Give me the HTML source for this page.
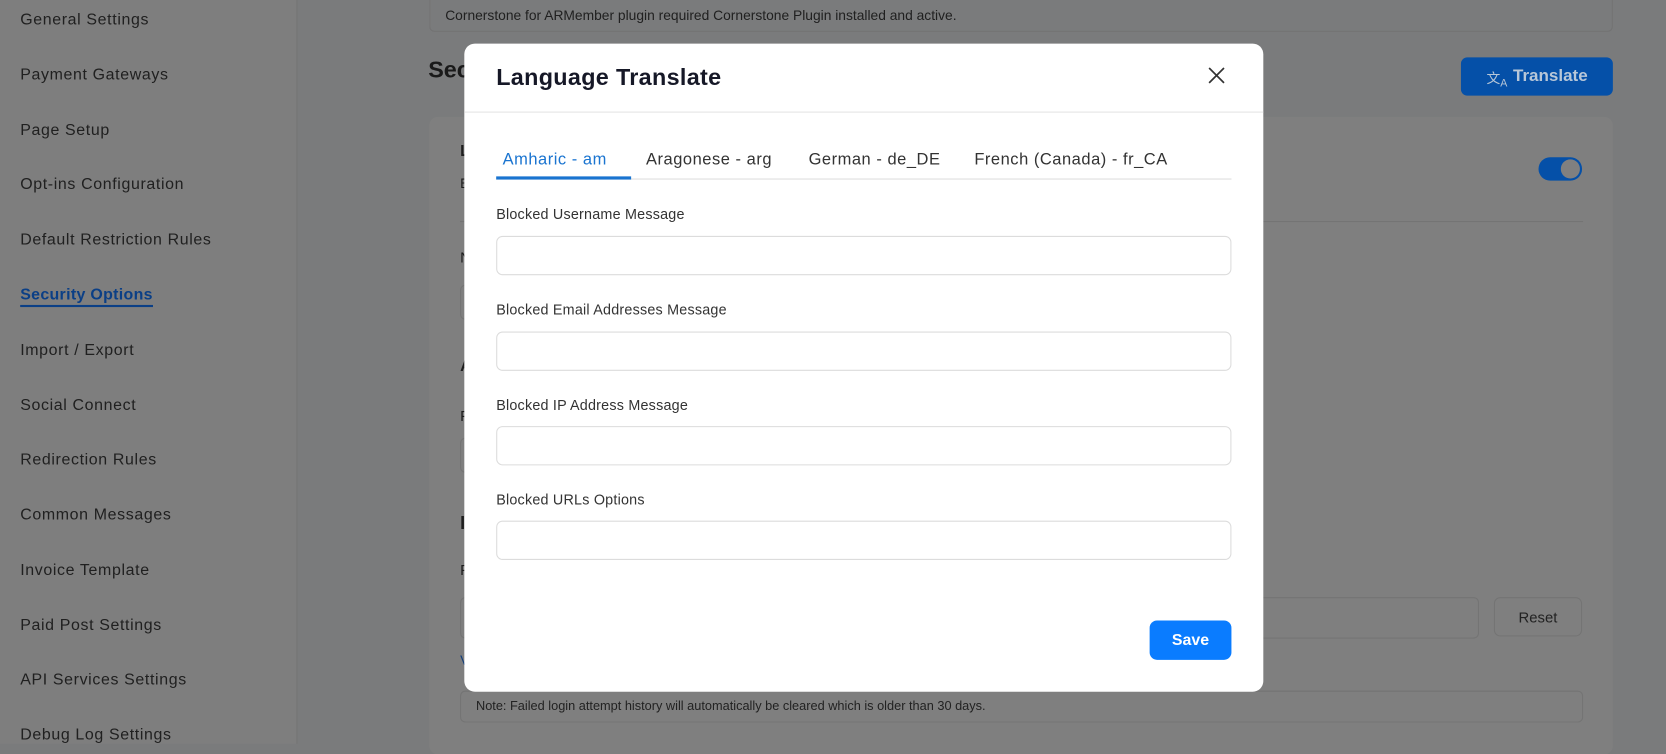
<!DOCTYPE html>
<html><head><meta charset="utf-8"><style>
*{box-sizing:border-box;margin:0;padding:0}
html,body{width:1666px;height:733px;overflow:hidden;background:#7a7b7c;font-family:"Liberation Sans",sans-serif}
#w{position:absolute;left:0;top:0;width:1568px;height:690px;transform:scale(1.0625);transform-origin:0 0}
.a{position:absolute}
.side{left:0;top:0;width:280px;height:700px;background:#7e7e7e;border-right:1px solid #747474}
.si{position:absolute;left:19px;font-size:15px;color:#202020;letter-spacing:.6px}
.modal{left:437px;top:41px;width:752px;height:610px;background:#fff;border-radius:10px}
.lab{position:absolute;left:30px;font-size:13.5px;color:#333;letter-spacing:.2px}
.inp{position:absolute;left:30px;width:692px;height:37px;border:1px solid #dcdcdc;border-radius:6px}
.tab{position:absolute;top:101px;font-size:15.5px;color:#333;letter-spacing:.5px}
.pk{position:absolute;left:433px;font-size:15px;color:#1e1e1e}
</style></head><body><div id="w">
<div class="a side">
<div class="si" style="top:10px">General Settings</div>
<div class="si" style="top:62px">Payment Gateways</div>
<div class="si" style="top:114px">Page Setup</div>
<div class="si" style="top:165px">Opt-ins Configuration</div>
<div class="si" style="top:217px">Default Restriction Rules</div>
<div class="si" style="top:269px;color:#0b3f86;font-weight:bold;border-bottom:2px solid #0b3f86;padding-bottom:1px;letter-spacing:.3px">Security Options</div>
<div class="si" style="top:321px">Import / Export</div>
<div class="si" style="top:373px">Social Connect</div>
<div class="si" style="top:424px">Redirection Rules</div>
<div class="si" style="top:476px">Common Messages</div>
<div class="si" style="top:528px">Invoice Template</div>
<div class="si" style="top:580px">Paid Post Settings</div>
<div class="si" style="top:631px">API Services Settings</div>
<div class="si" style="top:683px">Debug Log Settings</div>
</div>
<div class="a" style="left:404px;top:0;width:1114px;height:30px;border:1px solid #727272;border-top:none;border-radius:0 0 5px 5px;font-size:13px;color:#202020;padding:7px 14px">Cornerstone for ARMember plugin required Cornerstone Plugin installed and active.</div>
<div class="a" style="left:403px;top:53px;font-size:22px;font-weight:bold;color:#1a1a1a">Security Options</div>
<div class="a" style="left:1375px;top:54px;width:143px;height:36px;background:#0550a8;border-radius:6px;color:#b8c7d8;font-size:16px;font-weight:bold;padding:9px 0 0 49px">Translate<span style="position:absolute;left:24px;top:9px;font-size:13px;font-weight:normal">文<sub style="font-size:10px">A</sub></span></div>
<div class="a" style="left:404px;top:110px;width:1114px;height:600px;background:#7f7f7f;border-radius:8px"></div>
<div class="pk" style="top:134px;font-weight:bold">L</div>
<div class="pk" style="top:165px;font-size:13px">E</div>
<div class="pk" style="top:234px;font-size:14px">N</div>
<div class="pk" style="top:336px;font-weight:bold">A</div>
<div class="pk" style="top:383px;font-size:14px">F</div>
<div class="pk" style="top:483px;font-weight:bold;font-size:17px">I</div>
<div class="pk" style="top:528px;font-size:14px">F</div>
<div class="pk" style="top:614px;font-size:13px;color:#123e7a">V</div>
<div class="a" style="left:1448px;top:148px;width:41px;height:22px;background:#0550a8;border-radius:11px"><div class="a" style="right:2px;top:2px;width:18px;height:18px;border-radius:50%;background:#808080"></div></div>
<div class="a" style="left:433px;top:208px;width:1057px;height:1px;background:#747474"></div>
<div class="a" style="left:433px;top:268px;width:20px;height:33px;border:1px solid #747474;border-radius:5px"></div>
<div class="a" style="left:433px;top:412px;width:20px;height:33px;border:1px solid #747474;border-radius:5px"></div>
<div class="a" style="left:433px;top:562px;width:959px;height:39px;border:1px solid #747474;border-radius:5px"></div>
<div class="a" style="left:1406px;top:562px;width:83px;height:37px;border:1px solid #747474;border-radius:6px;font-size:14px;color:#222;text-align:center;padding-top:10px">Reset</div>
<div class="a" style="left:433px;top:650px;width:1057px;height:30px;border:1px solid #747474;border-radius:5px;font-size:12px;color:#222;padding:6px 14px">Note: Failed login attempt history will automatically be cleared which is older than 30 days.</div>
<div class="a modal">
<div class="a" style="left:30px;top:19px;font-size:22px;font-weight:bold;color:#161827;letter-spacing:.3px">Language Translate</div>
<svg class="a" style="left:699px;top:21px" width="18" height="18" viewBox="0 0 18 18"><path d="M2 2L16 16M16 2L2 16" stroke="#333" stroke-width="1.6"/></svg>
<div class="a" style="left:0;top:64px;width:752px;height:1px;background:#e4e4e4"></div>
<div class="tab" style="left:36px;color:#1a74d0">Amharic - am</div>
<div class="tab" style="left:171px">Aragonese - arg</div>
<div class="tab" style="left:324px">German - de_DE</div>
<div class="tab" style="left:480px">French (Canada) - fr_CA</div>
<div class="a" style="left:30px;top:127px;width:692px;height:1px;background:#dcdcdc"></div>
<div class="a" style="left:30px;top:125px;width:127px;height:3px;background:#1a74d0"></div>
<div class="lab" style="top:153px">Blocked Username Message</div>
<div class="inp" style="top:181px"></div>
<div class="lab" style="top:243px">Blocked Email Addresses Message</div>
<div class="inp" style="top:271px"></div>
<div class="lab" style="top:333px">Blocked IP Address Message</div>
<div class="inp" style="top:360px"></div>
<div class="lab" style="top:422px">Blocked URLs Options</div>
<div class="inp" style="top:449px"></div>
<div class="a" style="left:645px;top:543px;width:77px;height:37px;background:#0a7cff;border-radius:7px;color:#fff;font-size:15px;font-weight:bold;text-align:center;padding-top:10px">Save</div>
</div>
</div></body></html>
